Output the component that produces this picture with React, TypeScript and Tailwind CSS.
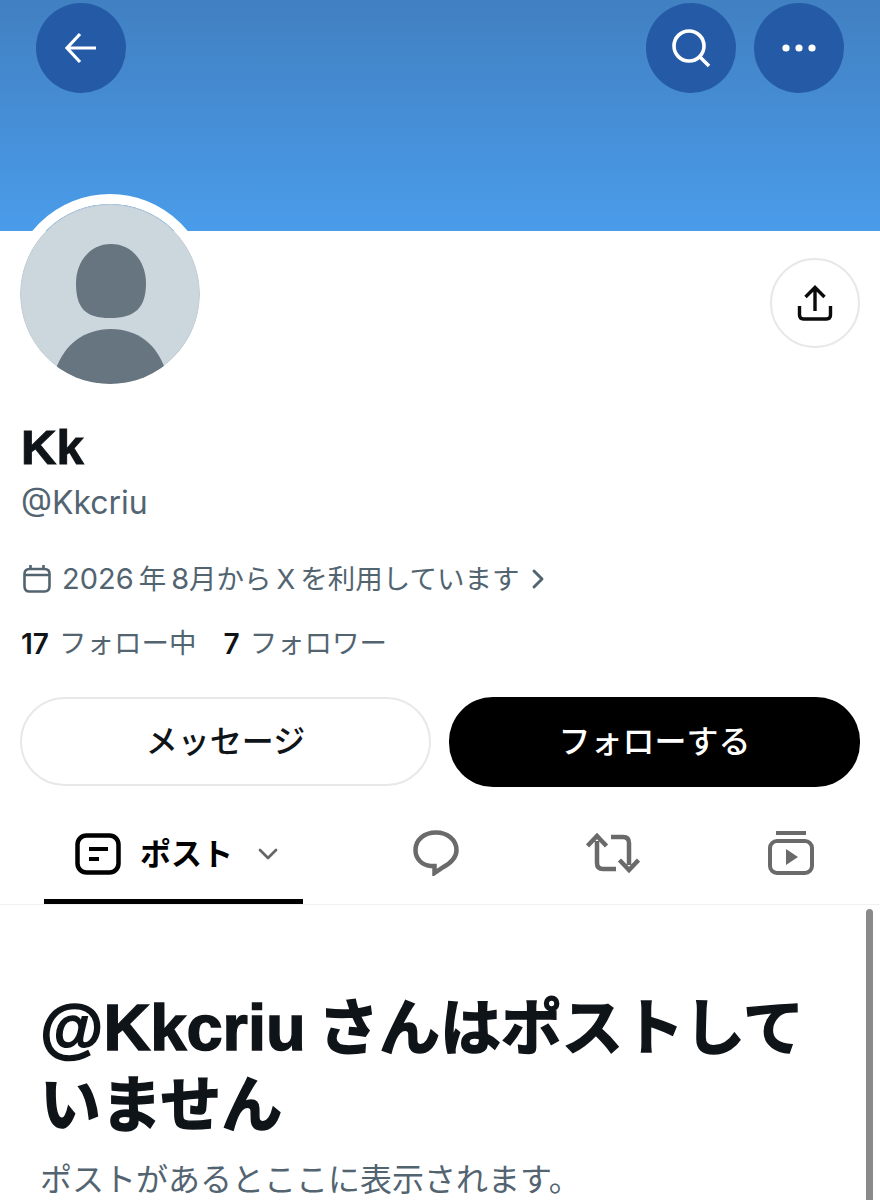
import { ChevronDown, ChevronRight } from "lucide-react";

const latin = "font-['Liberation_Sans','Noto_Sans_CJK_JP',sans-serif]";
const soft = "font-['Inter','Noto_Sans_CJK_JP',sans-serif]";

function CircleButton({ children }: { children: React.ReactNode }) {
  return (
    <button className="flex h-[90px] w-[90px] items-center justify-center rounded-full bg-[#255ba6]">
      {children}
    </button>
  );
}

function Avatar() {
  return (
    <div className="h-[200px] w-[200px] shrink-0 rounded-full border-[10px] border-white">
      <svg viewBox="0 0 180 180" className="h-full w-full rounded-full">
        <circle cx="90" cy="90" r="89.5" fill="#ccd6dd" stroke="#c1cbd3" />
        <path
          d="M91 40c22 0 35 19 35 39 0 25-11 35-36 35s-34-10-34-35c0-20 13-39 35-39z"
          fill="#66757f"
        />
        <path d="M36 165c8-24 28-40 55-40s46 16 54 40c-14 10-33 15-55 15s-40-5-54-15z" fill="#66757f" />
      </svg>
    </div>
  );
}

export default function App() {
  return (
    <div className={`h-[1200px] w-[880px] overflow-hidden bg-white ${soft}`}>
      <header className="flex h-[231px] items-start justify-between bg-gradient-to-b from-[#4180c1] to-[#4a9cea] px-9 pt-[3px]">
        <CircleButton>
          <svg viewBox="0 0 34 34" className="h-[34px] w-[34px]" fill="none" stroke="white" strokeWidth="3.2">
            <path d="M32 17H3M16 3 3 17l13 14" />
          </svg>
        </CircleButton>
        <div className="flex gap-[18px]">
          <CircleButton>
            <svg viewBox="0 0 40 40" className="h-[40px] w-[40px]" fill="none" stroke="white" strokeWidth="3.6">
              <circle cx="18" cy="18" r="15" />
              <path d="m29 29 9 9" />
            </svg>
          </CircleButton>
          <CircleButton>
            <svg viewBox="0 0 34 8" className="h-[8px] w-[34px]" fill="white">
              <circle cx="4" cy="4" r="3.6" />
              <circle cx="17" cy="4" r="3.6" />
              <circle cx="30" cy="4" r="3.6" />
            </svg>
          </CircleButton>
        </div>
      </header>

      <section className="-mt-[37px] flex items-start justify-between pl-[10px] pr-5">
        <Avatar />
        <button className="mt-[64px] flex h-[90px] w-[90px] items-center justify-center rounded-full border-2 border-[#e6e8ea] bg-white">
          <svg viewBox="0 0 36 36" className="h-[36px] w-[36px]" fill="none" stroke="#0b0b0b" strokeWidth="3.4">
            <path d="M18 26V3M8.500 12 18 2.500 27.500 12" />
            <path d="M2.500 21v9c0 2.500 1.500 4 4 4h23c2.500 0 4-1.500 4-4v-9" />
          </svg>
        </button>
      </section>

      <section className="px-[21px]">
        <h1 className={`mt-[27px] text-[49px] leading-[52px] font-bold text-[#0f1419] [-webkit-text-stroke:1px_#0f1419] ${latin}`}>Kk</h1>
        <p className="mt-[10px] text-[32px] leading-[40px] text-[#536471]">@Kkcriu</p>
        <div className="mt-[36px] flex h-[40px] items-center text-[27.5px] text-[#536471]">
          <svg viewBox="0 0 28 28" className="ml-[2px] h-[28px] w-[28px]" fill="none" stroke="#536471" strokeWidth="2.600">
            <path d="M7.500 0v5M20.500 0v5" />
            <path d="M1.500 9c0-3 1.500-5 5-5h15c3.500 0 5 2 5 5v12c0 3.500-1.500 5.500-5 5.500h-15c-3.500 0-5-2-5-5.500zM1.500 10h25" />
          </svg>
          <span className="ml-[11px]">
            <span className="text-[29px]">2026</span>&#8201;年&#8201;<span className="text-[29px]">8</span>月から&#8201;X&#8201;を利用しています
          </span>
          <ChevronRight className="ml-[2px] h-[32px] w-[32px]" strokeWidth={2.2} />
        </div>
        <div className="mt-[25px] flex h-[40px] items-center text-[27.5px] text-[#536471]">
          <span className="text-[28px] font-semibold text-[#0f1419]">17</span>
          <span className="ml-[10px]">フォロー中</span>
          <span className="ml-[27px] text-[28px] font-semibold text-[#0f1419]">7</span>
          <span className="ml-[10px]">フォロワー</span>
        </div>
      </section>

      <div className="mt-[33px] flex gap-[18px] px-5">
        <button className="h-[89px] w-[411px] rounded-full border-2 border-[#e6e8ea] bg-white text-[32px] font-medium text-[#0f1419]">
          メッセージ
        </button>
        <button className="h-[90px] w-[411px] rounded-[44px] bg-black text-[32px] font-medium text-white">
          フォローする
        </button>
      </div>

      <nav className="mt-[22px] flex h-[96px] border-b border-[#eff1f3]">
        <div className="ml-[44px] mr-[44px] flex w-[259px] items-center border-b-[5px] border-black pl-[31px]">
          <svg viewBox="0 0 46 42" className="h-[42px] w-[46px]" fill="none" stroke="#000" strokeWidth="4.500">
            <rect x="2.500" y="2.500" width="41" height="37" rx="9" />
            <path d="M14 16h19M14 26h10" strokeWidth="4" />
          </svg>
          <span className="ml-[19px] text-[31px] font-bold text-black">ポスト</span>
          <ChevronDown className="ml-[19px] h-[32px] w-[32px] text-[#666]" strokeWidth={2} />
        </div>
        <div className="flex w-[178px] items-center justify-center pb-[8px]">
          <svg viewBox="0 0 46 46" className="h-[46px] w-[46px]" fill="none" stroke="#6a6a6a" strokeWidth="4.500">
            <path d="M23 2.500C11 2.500 2.500 10 2.500 20c0 9 6.500 15 15 16l4 0v7l9-6c9-5 13-10 13-17 0-10-9-17.500-20.500-17.500z" />
          </svg>
        </div>
        <div className="flex w-[178px] items-center justify-center pb-[8px]">
          <svg viewBox="0 0 54 40" className="h-[40px] w-[54px]" fill="none" stroke="#6a6a6a" strokeWidth="4.500">
            <path d="M11 8v22c0 4 2 6 6 6h13M1.500 13 11 3l9.500 10" />
            <path d="M43 32V10c0-4-2-6-6-6H25M33.500 27l9.500 10 9.500-10" />
          </svg>
        </div>
        <div className="flex w-[178px] items-center justify-center pb-[8px]">
          <svg viewBox="0 0 46 44" className="h-[44px] w-[46px]" fill="none" stroke="#6a6a6a" strokeWidth="4">
            <path d="M8 2h30" strokeWidth="4" />
            <rect x="2" y="10" width="42" height="32" rx="7" />
            <path d="M18 18v16l12-8z" fill="#6a6a6a" stroke="none" />
          </svg>
        </div>
      </nav>

      <div className="flex">
        <main className="flex-1 pl-[40px] pr-[60px]">
          <h2 className={`mt-[84px] text-[61px] leading-[77px] font-bold text-[#0f1419] [-webkit-text-stroke:1.5px_#0f1419] ${latin}`}>
            <span className="block whitespace-nowrap">
              <span className="text-[65px]">@Kkcriu</span>
              <span>&#8201;さんはポストして</span>
            </span>
            <span className="block">いません</span>
          </h2>
          <p className="mt-[15px] text-[32px] leading-[40px] text-[#536471]">ポストがあるとここに表示されます。</p>
        </main>
        <div className="mr-[7px] mt-[4px] h-[295px] w-[7px] rounded-full bg-[#8a8a8a]" />
      </div>
    </div>
  );
}
